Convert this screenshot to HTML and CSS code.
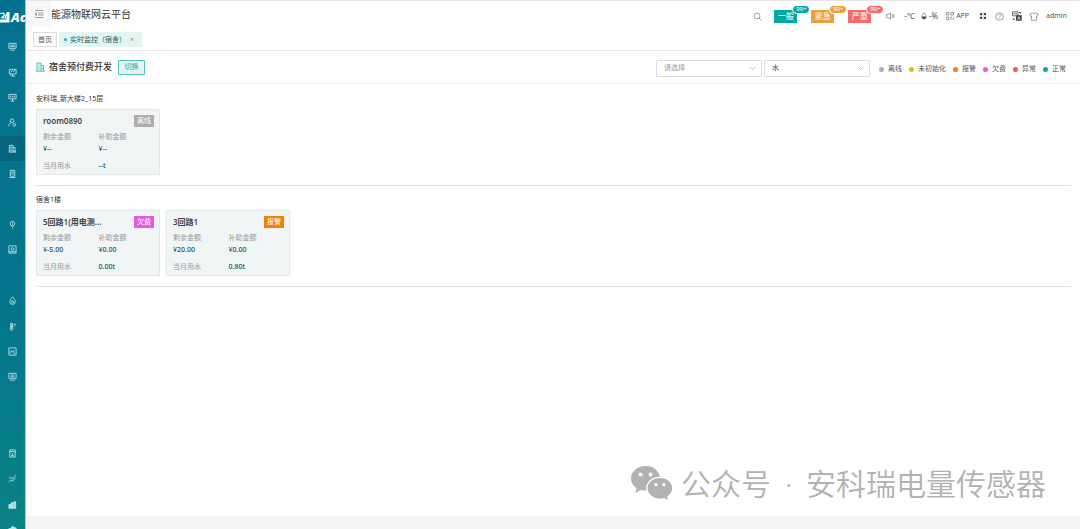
FILE: index.html
```
<!DOCTYPE html>
<html lang="zh-CN">
<head>
  <meta charset="UTF-8">
  <title>能源物联网云平台</title>
  <meta name="viewport" content="width=device-width, initial-scale=1.0">
  <link rel="stylesheet" href="styles.css">
</head>
<body>
  <aside class="sidebar">
    <div class="logo">
      <svg width="10" height="12" viewBox="0 0 10 12"><path d="M0 10h8V1" stroke-width="3"/><path d="M0 2.500l4-.5M4 2v3L1 7M2.500 7h3V4.500L8 2" stroke-width="1.200"/></svg>
      <span>Ac</span>
    </div>
    <nav class="menu">
      <a href="#" aria-label="总览"><svg viewBox="0 0 10 10"><path d="M1 1.500h8v5.500H1zM2.500 9h5M2.500 3.500h5M2.500 5h5"/></svg></a>
      <a href="#" aria-label="监控"><svg viewBox="0 0 10 10"><path d="M1.500 1.500h7.500v5H1.500zM3 4.500l2-1.500 1 1 2-2M2 6.500l2 2.500h4M5 7v2"/></svg></a>
      <a href="#" aria-label="大屏"><svg viewBox="0 0 10 10"><path d="M1 1.500h8v5H1zM3 9h4M5 6.500V9M3 3v2M5 3v2M7 3v2"/></svg></a>
      <a href="#" aria-label="用户"><svg viewBox="0 0 10 10"><circle cx="4.500" cy="3" r="2"/><path d="M1 9c0-2.500 1.500-4 3.500-4"/><circle cx="7" cy="7.500" r="1.500"/></svg></a>
      <a href="#" class="active" aria-label="宿舍"><svg viewBox="0 0 10 10"><path d="M1.500 9V1.500h4V9M5.500 4H8v2M1 9h8M2.500 3.500h2M2.500 5.500h2M2.500 7.500h2"/><circle cx="7.500" cy="7.500" r="1"/></svg></a>
      <a href="#" aria-label="单据"><svg viewBox="0 0 10 10"><path d="M2.500 1.500h5V8h-5zM1.500 9.500h7M3.500 3.500h3M3.500 5.500h3"/></svg></a>
      <span></span>
      <a href="#" aria-label="照明"><svg viewBox="0 0 10 10"><circle cx="5" cy="4" r="2.500"/><path d="M4 7.500h2M4.500 9h1M5 3v2"/></svg></a>
      <a href="#" aria-label="设备"><svg viewBox="0 0 10 10"><path d="M1 1h8v8H1zM1 7.500h8"/><circle cx="5" cy="4.500" r="1.500"/></svg></a>
      <span></span>
      <a href="#" aria-label="水"><svg viewBox="0 0 10 10"><path d="M5 1C3 3.500 2 4.500 2 6.500a3 2.800 0 0 0 6 0C8 4.500 7 3.500 5 1zM5 4.500L3.800 6.500h2.400L5 8.200"/></svg></a>
      <a href="#" aria-label="温度"><svg viewBox="0 0 10 10"><path d="M3 1.500h2v5a1.500 1.500 0 1 1-2 0zM4 3v5M6.500 2.500H9M6.500 4.500H8"/></svg></a>
      <a href="#" aria-label="图像"><svg viewBox="0 0 10 10"><path d="M1 1h8v8H1zM2 7l2-3 1.500 2L7 3.500M6 7h2"/></svg></a>
      <a href="#" aria-label="显示"><svg viewBox="0 0 10 10"><path d="M1 1.500h8v5.500H1zM2 9h6M3 3.500h4M3 5.200h4"/></svg></a>
      <span></span>
      <span></span>
      <a href="#" aria-label="报表"><svg viewBox="0 0 10 10"><path d="M2 1h6v8H2zM2 3h6M5 4.500v3M3.500 7.500h3"/></svg></a>
      <a href="#" aria-label="趋势"><svg viewBox="0 0 10 10"><path d="M1 5l2-1.500L5 5l4-3.500M1 8.500l2-2 2 1.500 3-3.500"/></svg></a>
      <a href="#" aria-label="统计"><svg viewBox="0 0 10 10"><path class="fill" d="M1 5h2v4H1zM3.500 3h2v6h-2zM6.500 2h2v7h-2z"/><path d="M1 9h8"/></svg></a>
      <a href="#" aria-label="设置"><svg viewBox="0 0 10 10"><path class="fill" d="M5 1l2 2h2v4H1V4h2z"/></svg></a>
    </nav>
  </aside>

  <div class="page">
    <header class="topbar">
      <button class="collapse" aria-label="收起菜单"><svg width="10" height="10" viewBox="0 0 10 10"><path d="M1 1.500h8.500M4 4h5.500M4 6h5.500M1 8.500h8.500M2.500 3.500L1 5l1.500 1.500z"/></svg></button>
      <h1>能源物联网云平台</h1>
      <div class="tools">
        <button aria-label="搜索"><svg width="9" height="9" viewBox="0 0 9 9"><circle cx="4" cy="4" r="3"/><path d="M6.200 6.200L8.500 8.500"/></svg></button>
        <div class="alarms">
          <button class="alarm normal">一般<span class="badge">99+</span></button>
          <button class="alarm urgent">紧急<span class="badge">99+</span></button>
          <button class="alarm severe">严重<span class="badge">99+</span></button>
        </div>
        <button class="mute" aria-label="静音"><svg width="9" height="8" viewBox="0 0 9 8"><path d="M.5 2.500H2L4.500.8v6.400L2 5.500H.5zM5.500 2l3 4M8.500 2l-3 4"/></svg></button>
        <span class="temp">-℃</span>
        <span class="humid"><svg width="6" height="8" viewBox="0 0 6 8"><path d="M3 .5C1.500 2.800.8 3.800.8 5a2.200 2.200 0 0 0 4.400 0C5.200 3.800 4.500 2.800 3 .5z"/><path class="solid" d="M1 4.500h4v1.200L3 7.200 1 5.700z"/></svg>-%</span>
        <a href="#" class="app"><svg width="8" height="8" viewBox="0 0 8 8"><path d="M.5.500h2.500v2.500H.5zM.5 5h2.500v2.500H.5zM5 .5h2.500v2.500H5zM5 7.500V5h1M7.500 5v2.500H6.500"/></svg>APP</a>
        <button class="full" aria-label="全屏"><svg width="8" height="8" viewBox="0 0 8 8"><path class="solid" d="M1 1h2.200v2.200H1zM4.800 1H7v2.200H4.800zM1 4.800h2.200V7H1zM4.800 4.800H7V7H4.800z"/></svg></button>
        <button class="help" aria-label="帮助"><svg width="9" height="9" viewBox="0 0 9 9"><circle cx="4.500" cy="4.500" r="3.800"/><path d="M3.300 3.500c0-1.600 2.500-1.500 2.400 0 0 .9-1.200.9-1.200 1.800M4.500 6v.8"/></svg></button>
        <button class="lang" aria-label="语言"><svg width="10" height="10" viewBox="0 0 10 10"><path class="dark" d="M.5.800h5.500v4H.5zM1.500 2.800h3.500M7 1.500h1.500V3M1.500 7v1.500H3"/><path class="solid" d="M4 4.200h5.700v5.500H4z"/><path class="white" d="M5.700 8.500L6.800 5.800l1.100 2.700"/></svg></button>
        <button class="shirt" aria-label="主题"><svg width="10" height="9" viewBox="0 0 10 9"><path d="M3.500.8C4 2 6 2 6.500.8L9.200 2 8.500 4.200l-1-.3v4.300h-5V3.900l-1 .3L.8 2z"/></svg></button>
        <a href="#" class="user">admin</a>
      </div>
    </header>

    <div class="tabs">
      <a href="#" class="tab">首页</a>
      <a href="#" class="tab current"><i></i>实时监控（宿舍）<b>×</b></a>
    </div>

    <div class="titlebar">
      <svg class="building" width="9" height="10" viewBox="0 0 9 10"><path d="M1 9V1h4v8M5 3.500h2.500V9M0 9.200h9M2.300 3h1.400M2.300 5h1.400M2.300 7h1.400M6 5.500v2"/></svg>
      <h2>宿舍预付费开发</h2>
      <button class="switch">切换</button>
      <div class="filters">
        <label class="picker">
          <select class="empty" aria-label="状态"><option>请选择</option></select>
          <svg width="7" height="5" viewBox="0 0 7 5"><path d="M1 1l2.500 2.500L6 1"/></svg>
        </label>
        <label class="picker">
          <select aria-label="能源类型"><option>水</option><option>电</option></select>
          <svg width="7" height="5" viewBox="0 0 7 5"><path d="M1 1l2.500 2.500L6 1"/></svg>
        </label>
      </div>
      <ul class="legend">
        <li class="offline">离线</li>
        <li class="uninit">未初始化</li>
        <li class="warning">报警</li>
        <li class="arrears">欠费</li>
        <li class="abnormal">异常</li>
        <li class="ok">正常</li>
      </ul>
    </div>

    <main>
      <section class="floor">
        <h3>安科瑞_新大楼2_15层</h3>
        <div class="cards">
          <article class="card">
            <div class="card-head"><h4>room0890</h4><span class="state offline">离线</span></div>
            <dl>
              <div><dt>剩余金额</dt><dd>¥--</dd></div>
              <div><dt>补助金额</dt><dd>¥--</dd></div>
            </dl>
            <dl class="usage"><dt>当月用水</dt><dd>--t</dd></dl>
          </article>
        </div>
      </section>

      <section class="floor">
        <h3>宿舍1楼</h3>
        <div class="cards">
          <article class="card">
            <div class="card-head"><h4>5回路1(用电测...</h4><span class="state arrears">欠费</span></div>
            <dl>
              <div><dt>剩余金额</dt><dd>¥-5.00</dd></div>
              <div><dt>补助金额</dt><dd>¥0.00</dd></div>
            </dl>
            <dl class="usage"><dt>当月用水</dt><dd>0.00t</dd></dl>
          </article>
          <article class="card">
            <div class="card-head"><h4>3回路1</h4><span class="state warning">报警</span></div>
            <dl>
              <div><dt>剩余金额</dt><dd>¥20.00</dd></div>
              <div><dt>补助金额</dt><dd>¥0.00</dd></div>
            </dl>
            <dl class="usage"><dt>当月用水</dt><dd>0.80t</dd></dl>
          </article>
        </div>
      </section>
    </main>
    <footer></footer>
  </div>

  <div class="watermark">
    <svg width="42" height="34" viewBox="0 0 42 34">
      <path d="M15 0C6.500 0 0 5.500 0 12.500c0 4 2 7.300 5.500 9.700L4.500 27l5.300-2.900c1.700.5 3.400.7 5.500.7C14 17 20 10.800 29 10.800 27.500 4.500 22 0 15 0z"/>
      <path d="M29 12c-7 0-12.500 4.500-12.500 10.300S22 32.500 29 32.500c1.500 0 2.900-.2 4.200-.6l4 2.100-1-3.600c3.100-2 5-4.700 5-8.100C41.200 16.500 36 12 29 12z"/>
      <g fill="#fff"><circle cx="9.700" cy="8.500" r="1.900"/><circle cx="19.500" cy="8.500" r="1.900"/><circle cx="24.800" cy="18.700" r="1.600"/><circle cx="32.800" cy="18.700" r="1.600"/></g>
    </svg>
    <span>公众号<span class="dot"> · </span>安科瑞电量传感器</span>
  </div>
</body>
</html>
```
FILE: styles.css
```
* {
  box-sizing: border-box;
}
body {
  display: flex;
  height: 100vh;
  margin: 0;
  overflow: hidden;
  background: #fff;
  color: #555;
  font-family: "Noto Sans", "Noto Sans CJK SC", sans-serif;
  font-size: 7px;
  line-height: 10px;
}
h1, h2, h3, h4, dl, dd, ul {
  margin: 0;
  padding: 0;
}
a {
  color: inherit;
  text-decoration: none;
}
button {
  padding: 0;
  border: none;
  background: none;
  color: inherit;
  font: inherit;
  cursor: pointer;
}
svg {
  display: block;
  flex: none;
  fill: none;
  stroke: #888;
  stroke-width: 0.8;
}

/* sidebar */
.sidebar {
  display: flex;
  flex-direction: column;
  flex: none;
  width: 26px;
  overflow: hidden;
  border-right: 1px solid #9fd3d8;
  background: linear-gradient(#04728f, #04768c 60%, #0a8285);
}
.logo {
  display: flex;
  gap: 1px;
  align-items: center;
  height: 34px;
  color: #fff;
  font-family: "Open Sans", sans-serif;
  font-size: 13px;
  font-style: italic;
  font-weight: 800;
}
.logo svg {
  stroke: #fff;
}
.menu {
  display: flex;
  flex-direction: column;
  flex: 1;
  margin-bottom: -13px;
}
.menu a, .menu > span {
  display: flex;
  flex: 1;
  align-items: center;
  justify-content: center;
  padding-right: 1px;
}
.menu .active {
  background: #05647c;
}
.menu svg {
  width: 9px;
  height: 9px;
  stroke: #b9e3e6;
  stroke-width: 1;
}
.menu .fill {
  fill: #b9e3e6;
}

/* header */
.page {
  display: flex;
  flex: 1;
  flex-direction: column;
  min-width: 0;
  border-top: 1px solid #e6e6e6;
}
.topbar {
  display: flex;
  align-items: center;
  height: 26px;
}
.collapse {
  display: flex;
  align-items: center;
  justify-content: center;
  width: 25px;
  height: 26px;
  background: #f8f8f8;
}
h1 {
  color: #333;
  font-size: 10px;
  font-weight: 400;
}
.tools {
  display: flex;
  align-items: center;
  margin: 4px 13px 0 auto;
}
.alarms {
  display: flex;
  gap: 14px;
  margin: 0 15px 0 12px;
}
.alarm {
  position: relative;
  width: 23px;
  height: 13px;
  color: #fff;
  font-size: 8px;
}
.alarm.normal, .normal .badge {
  background: #00a9a2;
}
.alarm.urgent, .urgent .badge {
  background: #e6a23c;
}
.alarm.severe, .severe .badge {
  background: #f56c6c;
}
.badge {
  position: absolute;
  top: -5px;
  right: -13px;
  width: 18px;
  border: 1px solid #fff;
  border-radius: 5px;
  font-size: 6px;
  line-height: 7px;
}
.temp {
  margin: 0 6px 0 9px;
  font-size: 8px;
}
.humid, .app {
  display: flex;
  gap: 2px;
  align-items: center;
}
.humid {
  font-size: 8px;
}
.app {
  margin: 0 10px 0 8px;
}
.solid {
  fill: #444;
  stroke: none;
}
.dark {
  stroke: #444;
}
.white {
  stroke: #fff;
}
.help, .lang {
  margin-left: 8px;
}
.shirt {
  margin: 0 7px;
}

/* tabs */
.tabs {
  display: flex;
  gap: 2px;
  padding: 5px 7px 3px;
  border-bottom: 1px solid #e8e8e8;
}
.tab {
  display: flex;
  align-items: center;
  height: 15px;
  padding: 0 4px;
  border: 1px solid #ddd;
}
.tab.current {
  border-color: #e2f5f3;
  background: #e2f5f3;
  color: #245a55;
}
.tab i {
  width: 3px;
  height: 3px;
  margin-right: 3px;
  border-radius: 50%;
  background: #13b5a8;
}
.tab b {
  margin: 0 3px 0 4px;
  color: #888;
  font-weight: 400;
}

/* title bar */
.titlebar {
  display: flex;
  align-items: center;
  height: 33px;
  padding: 0 14px 0 10px;
  border-bottom: 1px solid #eee;
}
.building {
  stroke: #13b5a8;
}
h2 {
  margin: 0 6px 0 4px;
  color: #333;
  font-size: 9px;
  font-weight: 500;
}
.switch {
  width: 27px;
  height: 15px;
  border: 1px solid #4cc5bc;
  border-radius: 1px;
  background: #e2f5f3;
  color: #13a89d;
}
.filters {
  display: flex;
  gap: 2px;
  margin: 2px 9px 0 auto;
}
.picker {
  position: relative;
}
.picker select {
  display: block;
  width: 106px;
  height: 17px;
  padding: 0 7px;
  border: 1px solid #ddd;
  border-radius: 1px;
  appearance: none;
  background: #fff;
  color: #444;
  font: inherit;
}
.picker .empty {
  color: #999;
}
.picker svg {
  position: absolute;
  top: 6px;
  right: 6px;
  stroke: #aaa;
  pointer-events: none;
}
.legend {
  display: flex;
  gap: 7px;
  margin-top: 4px;
  list-style: none;
}
.legend li {
  display: flex;
  gap: 4px;
  align-items: center;
}
.legend li::before {
  width: 5px;
  height: 5px;
  border-radius: 50%;
  background: var(--state);
  content: "";
}
.offline { --state: #adadad; }
.uninit { --state: #dcbf00; }
.warning { --state: #ea830c; }
.arrears { --state: #e25be0; }
.abnormal { --state: #e85d5d; }
.ok { --state: #00aea5; }

/* rooms */
main {
  flex: 1;
  padding: 1px 9px 0 10px;
}
.floor {
  padding: 9px 0 10px;
  border-bottom: 1px solid #e3e3e3;
}
h3 {
  margin-bottom: 5px;
  color: #333;
  font-size: 7px;
  font-weight: 400;
}
.cards {
  display: flex;
  gap: 6px;
}
.card {
  width: 124px;
  padding: 5px 5px 2px 6px;
  border: 1px solid #e4e8e9;
  background: #f1f5f6;
}
.card-head {
  display: flex;
  align-items: center;
  justify-content: space-between;
  height: 12px;
  margin-bottom: 4px;
}
h4 {
  color: #444;
  font-size: 8px;
  font-weight: 600;
}
.state {
  width: 20px;
  background: var(--state);
  color: #fff;
  line-height: 12px;
  text-align: center;
}
.card dl {
  display: grid;
  grid-template-columns: 1fr 1fr;
  align-items: center;
}
.card .usage {
  margin-top: 5px;
}
dt {
  color: #999;
  line-height: 12px;
}
dd {
  color: #24504f;
  font-weight: 500;
  line-height: 12px;
}
footer {
  height: 13px;
  background: #f4f4f4;
}

/* floating account mark */
.watermark {
  position: absolute;
  right: 34px;
  bottom: 26px;
  display: flex;
  gap: 8px;
  align-items: center;
  color: #b2b2b2;
  font-family: "Noto Sans CJK SC", sans-serif;
  font-size: 30px;
  font-weight: 350;
  line-height: 38px;
}
.watermark svg {
  fill: #b2b2b2;
  stroke: none;
}
.watermark .dot {
  margin: 0 6px;
  font-family: "Noto Sans", sans-serif;
}
```
